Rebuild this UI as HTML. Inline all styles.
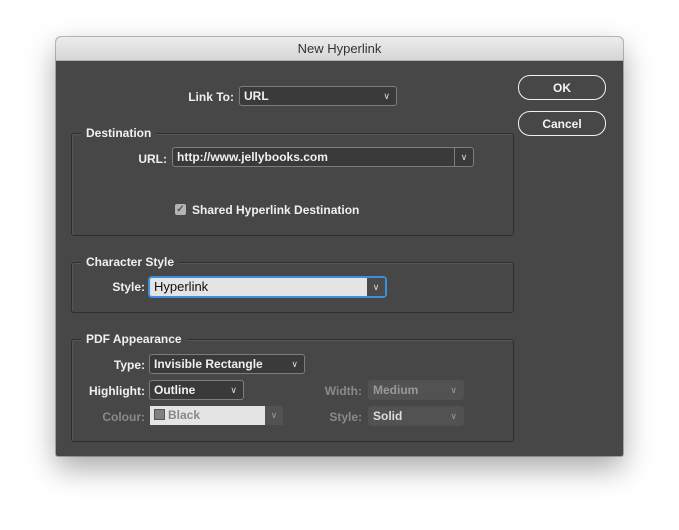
<!DOCTYPE html>
<html><head><style>
body{margin:0;width:679px;height:530px;background:#fff;position:relative;overflow:hidden;font-family:"Liberation Sans",sans-serif;}
#dlg{position:absolute;left:56px;top:37px;width:567px;height:419px;background:#474747;border-radius:5px 5px 2px 2px;box-shadow:0 12px 30px rgba(0,0,0,.35),0 0 0 1px rgba(0,0,0,.25);overflow:hidden}
#tb{position:absolute;left:0;top:0;width:567px;height:23px;background:linear-gradient(#ececec,#d6d6d6);border-bottom:1px solid #b0b0b0;text-align:center;font-size:13px;line-height:23px;color:#333}
.a{position:absolute;font-size:12px;font-weight:bold;color:#f0f0f0;white-space:nowrap;line-height:14px}
.r{text-align:right}
.dis{color:#8a8a8a}
.box{position:absolute;border:1px solid #2e2e2e;border-radius:3px;box-shadow:1px 1px 0 #575757 inset}
.lg{position:absolute;background:#474747;padding:0 5px;font-size:12px;font-weight:bold;color:#f0f0f0;top:-8px;left:9px;line-height:14px}
.dd{position:absolute;height:18px;border:1px solid #7d7d7d;border-radius:3px;background:#3a3a3a;color:#f0f0f0;font-size:12px;font-weight:bold;line-height:18px;padding-left:4px;box-sizing:content-box}
.dd .c{position:absolute;right:6px;top:0;font-size:9px;color:#ddd;font-weight:normal}
.dd.off{border-color:#515151;background:#525252;color:#999}
.btn{position:absolute;left:462px;width:86px;height:23px;border:1.5px solid #f0f0f0;border-radius:12px;color:#f4f4f4;font-size:12px;font-weight:bold;text-align:center;line-height:24px}
</style></head><body>
<div id="dlg">
<div id="tb">New Hyperlink</div>
<div class="btn" style="top:38px">OK</div>
<div class="btn" style="top:74px">Cancel</div>

<div class="a r" style="left:100px;width:78px;top:53px">Link To:</div>
<div class="dd" style="left:183px;top:49px;width:152px">URL<span class="c">&#x2228;</span></div>

<div class="box" style="left:15px;top:96px;width:441px;height:101px"><div class="lg">Destination</div></div>
<div class="a r" style="left:60px;width:51px;top:115px">URL:</div>
<div class="dd" style="left:116px;top:110px;width:296px;background:#3a3a3a">http://www.jellybooks.com<span class="c" style="right:0;width:18px;text-align:center;border-left:1px solid #7d7d7d;height:18px">&#x2228;</span></div>
<div style="position:absolute;left:119px;top:167px;width:11px;height:11px;background:#b4b4b4;border-radius:2px;color:#555;font-size:10px;line-height:11px;text-align:center;font-weight:bold">&#x2713;</div>
<div class="a" style="left:136px;top:166px">Shared Hyperlink Destination</div>

<div class="box" style="left:15px;top:225px;width:441px;height:49px"><div class="lg">Character Style</div></div>
<div class="a r" style="left:40px;width:49px;top:243px">Style:</div>
<div class="dd" style="left:93px;top:240px;width:231px;background:#e4e4e4;color:#111;font-weight:normal;font-size:13px;border-color:#3d8fe0;box-shadow:0 0 0 1px #3d8fe0">Hyperlink<span class="c" style="right:0;width:18px;text-align:center;background:#4a4a4a;color:#ddd;height:18px">&#x2228;</span></div>

<div class="box" style="left:15px;top:302px;width:441px;height:101px"><div class="lg">PDF Appearance</div></div>
<div class="a r" style="left:30px;width:59px;top:321px">Type:</div>
<div class="dd" style="left:93px;top:317px;width:150px">Invisible Rectangle<span class="c">&#x2228;</span></div>
<div class="a r" style="left:20px;width:69px;top:347px">Highlight:</div>
<div class="dd" style="left:93px;top:343px;width:89px">Outline<span class="c">&#x2228;</span></div>
<div class="a r dis" style="left:20px;width:69px;top:373px">Colour:</div>
<div style="position:absolute;left:94px;top:369px;width:115px;height:19px;background:#e4e4e4;color:#888;font-size:12px;font-weight:bold;line-height:19px"><span style="display:inline-block;width:9px;height:9px;background:#808080;border:1px solid #555;margin:0 3px 0 4px;vertical-align:-1px"></span>Black</div>
<div style="position:absolute;left:209px;top:369px;width:18px;height:19px;background:#525252;color:#999;font-size:9px;line-height:19px;text-align:center">&#x2228;</div>
<div class="a r dis" style="left:240px;width:66px;top:347px">Width:</div>
<div class="dd off" style="left:312px;top:343px;width:90px">Medium<span class="c" style="color:#999">&#x2228;</span></div>
<div class="a r dis" style="left:240px;width:66px;top:373px">Style:</div>
<div class="dd off" style="left:312px;top:369px;width:90px;color:#ddd">Solid<span class="c" style="color:#999">&#x2228;</span></div>
</div>
</body></html>
